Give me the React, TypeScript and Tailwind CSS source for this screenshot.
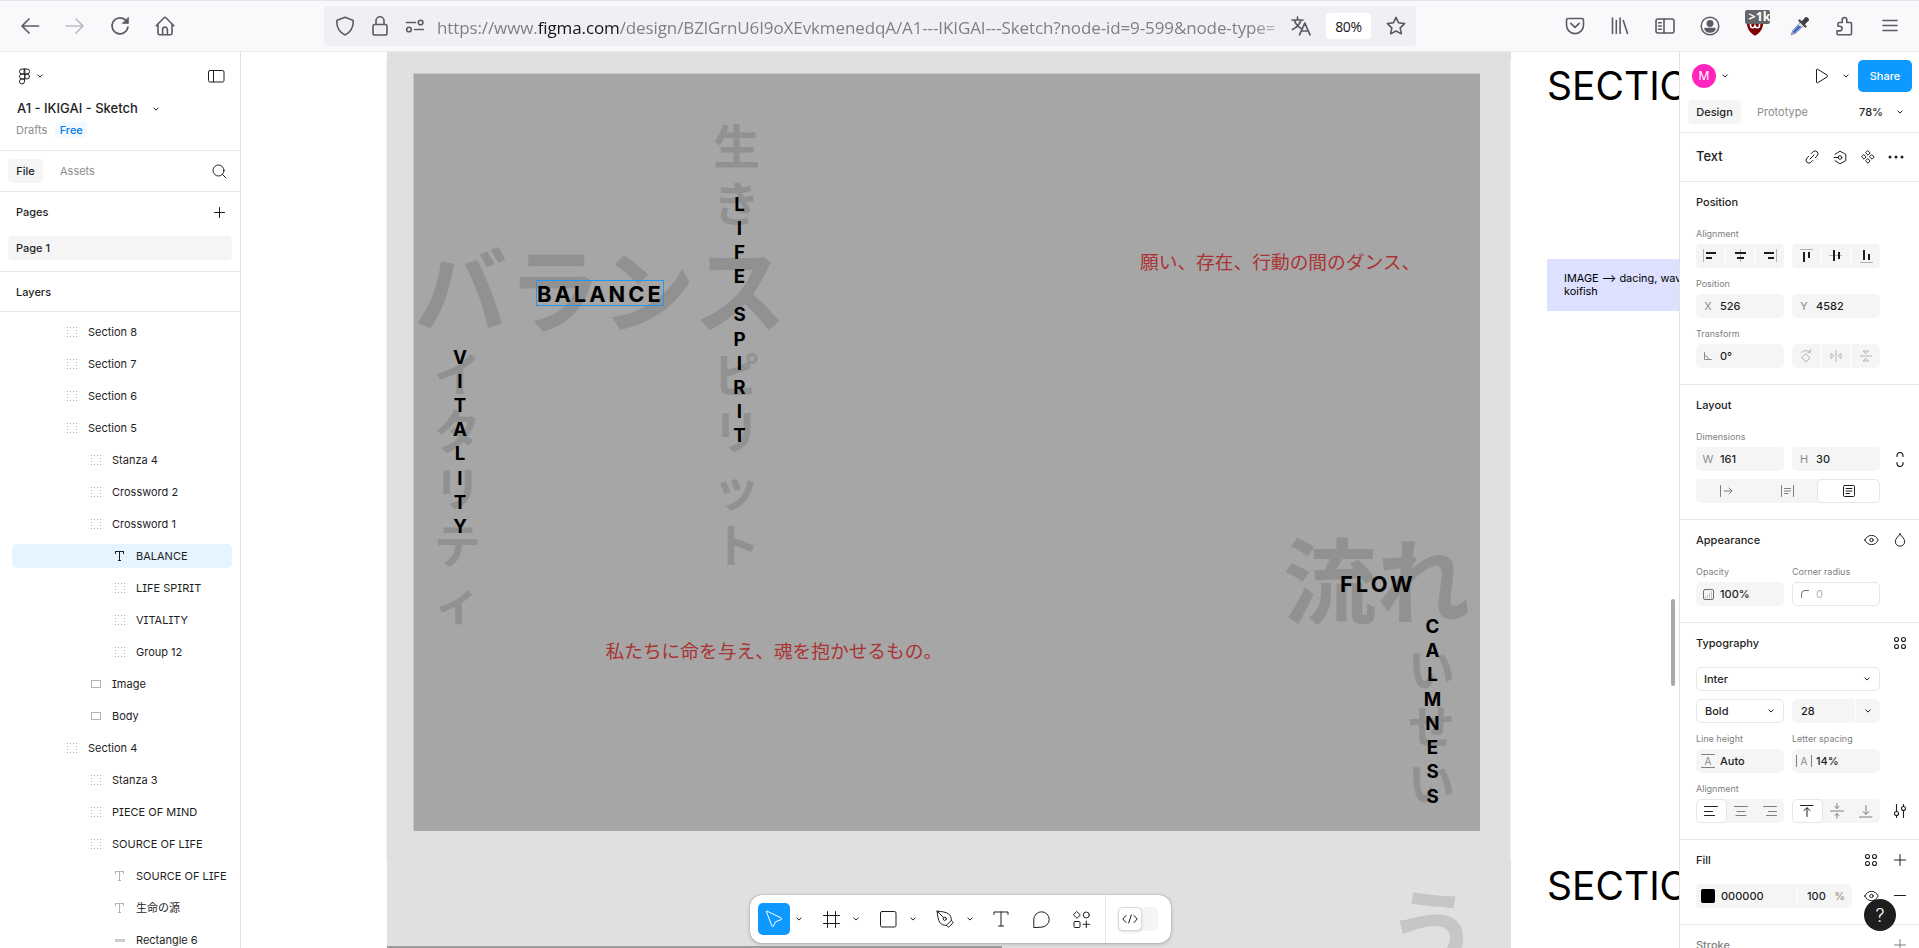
import type { ReactNode } from "react";

type IconProps = { w?: number; h?: number; sw?: number; className?: string; children: ReactNode };

function Icon({ w = 16, h = 16, sw = 1, className = "", children }: IconProps) {
  return (
    <svg
      width={w}
      height={h}
      viewBox={`0 0 ${w} ${h}`}
      fill="none"
      stroke="currentColor"
      strokeWidth={sw}
      strokeLinecap="round"
      strokeLinejoin="round"
      className={`shrink-0 ${className}`}
    >
      {children}
    </svg>
  );
}

const Chevron = ({ className = "" }: { className?: string }) => (
  <Icon w={8} h={8} className={className}>
    <path d="M1.8 2.9 4 5.1 6.2 2.9" />
  </Icon>
);

/* ---------- Browser toolbar ---------- */

function NavCell({ children }: { children: ReactNode }) {
  return <div className="flex h-full w-[45px] shrink-0 items-center justify-center">{children}</div>;
}

function BrowserBar() {
  return (
    <header className="flex h-[52px] shrink-0 items-center border-t border-b border-t-[#e4e4e8] border-b-[#ebebef] bg-[#f9f9fb] pl-[7px] text-[#5b5b66]">
      <NavCell>
        <Icon w={20} h={20} sw={1.7}>
          <path d="M18.5 10H2M9 3 2 10l7 7" />
        </Icon>
      </NavCell>
      <NavCell>
        <Icon w={20} h={20} sw={1.7} className="text-[#bcbcc2]">
          <path d="M1.5 10H18M11 3l7 7-7 7" />
        </Icon>
      </NavCell>
      <NavCell>
        <Icon w={20} h={20} sw={1.7}>
          <path d="M17.9 11.2A8 8 0 1 1 15.4 4" />
          <path d="M18.4 1.6v5.8h-5.8z" fill="currentColor" strokeWidth={0.8} />
        </Icon>
      </NavCell>
      <NavCell>
        <Icon w={20} h={20} sw={1.6}>
          <path d="M1.2 9.8 9.1 1.7a1.2 1.2 0 0 1 1.8 0l7.9 8.1M3 8.4v8.8c0 .9.7 1.6 1.6 1.6h10.8c.9 0 1.6-.7 1.6-1.6V8.4" />
          <path d="M7.6 18.5v-5.1a2.400 2.400 0 0 1 4.800 0v5.100" />
        </Icon>
      </NavCell>

      <div className="ml-[137px] flex h-10 w-[1092px] shrink-0 items-center rounded bg-[#f0f0f4] pl-[3px]">
        <div className="flex w-[35px] justify-center">
          <Icon w={20} h={20} sw={1.6}>
            <path d="M10 1.200 17.800 4.200c.3.100.5.400.5.700-.1 6.600-2.400 11.400-8.300 14C4.100 16.300 1.800 11.500 1.700 4.900c0-.3.200-.6.500-.7z" />
          </Icon>
        </div>
        <div className="flex w-[35px] justify-center">
          <Icon w={16} h={20} sw={1.6}>
            <rect x="1" y="8.500" width="14" height="10.500" rx="1.800" />
            <path d="M4 8.300V4.800a4 4 0 0 1 8 0v3.500" />
          </Icon>
        </div>
        <div className="flex w-[35px] justify-center">
          <Icon w={20} h={14} sw={1.6}>
            <path d="M1.500 3.500h9M9.500 10.500h9" />
            <circle cx="15.600" cy="3.500" r="2.300" />
            <circle cx="4" cy="10.500" r="2.300" />
          </Icon>
        </div>
        <div className="ml-[5px] w-[846px] overflow-hidden pt-[3px] whitespace-nowrap font-['Open_Sans',sans-serif] text-[17px] leading-[26px] tracking-[-0.110px] text-[#7f7f86] [mask-image:linear-gradient(to_right,#000_815px,transparent_855px)]">
          https://www.<span className="text-[#15141a]">figma.com</span>
          /design/BZlGrnU6I9oXEvkmenedqA/A1---IKIGAI---Sketch?node-id=9-599&amp;node-type=
        </div>
        <div className="flex w-9 justify-center">
          <Icon w={20} h={20} sw={1.7}>
            <path d="M1 4h11M6.500 1.200V4M10 4C9 8 5.500 11.500 1.500 13.500M3.300 4c1 3.500 3.500 6.500 6.500 8.200M8.500 18.800 13.800 7l5.200 11.800M10.300 15h7" />
          </Icon>
        </div>
        <div className="ml-[7px] flex h-[26px] w-[45px] items-center justify-center rounded bg-white pt-px font-['Open_Sans',sans-serif] text-[14px] tracking-[-0.3px] text-[#15141a]">
          80%
        </div>
        <div className="ml-[13px] flex w-6 justify-center">
          <Icon w={20} h={20} sw={1.6}>
            <path d="m10 1.300 2.600 5.500 6 .8-4.400 4.200 1.100 6.100L10 15l-5.300 2.900 1.100-6.100L1.400 7.600l6-.8z" />
          </Icon>
        </div>
      </div>

      <div className="ml-auto flex h-full pr-[7px]">
        <NavCell>
          <Icon w={20} h={20} sw={1.6}>
            <path d="M3.200 2.500h13.600c.9 0 1.700.7 1.700 1.700v4.900a8.500 8.500 0 0 1-17 0V4.200c0-1 .8-1.700 1.700-1.700z" />
            <path d="m5.800 7.300 4.200 4 4.200-4" />
          </Icon>
        </NavCell>
        <NavCell>
          <Icon w={18} h={20} sw={1.6}>
            <path d="M1.500 2v15.500M5.300 4.500v13M9.100 2v15.500M12.300 4.500l4.200 13" />
          </Icon>
        </NavCell>
        <NavCell>
          <Icon w={20} h={18} sw={1.6}>
            <rect x="1" y="2" width="18" height="14" rx="2" />
            <path d="M9 2v14M3.500 5.800h2.800M3.500 9h2.800M3.500 12.200h2.800" />
          </Icon>
        </NavCell>
        <NavCell>
          <Icon w={20} h={20} sw={1.5}>
            <circle cx="10" cy="10" r="8.800" />
            <circle cx="10" cy="7.500" r="2.700" fill="currentColor" />
            <path d="M5 12.500h10c-.5 2.300-2.500 3.500-5 3.500s-4.500-1.200-5-3.500z" fill="currentColor" />
          </Icon>
        </NavCell>
        <NavCell>
          <div className="relative">
            <svg width="20" height="20" viewBox="0 0 20 20">
              <path d="M10 0c3 1.800 5 2.600 8.500 2.800 0 8-1.500 13-8.500 17C3 15.800 1.500 10.800 1.500 2.800 5 2.600 7 1.800 10 0z" fill="#800000" />
              <path d="M5.500 7.500v2a2.200 2.200 0 0 0 4.500 0V8.500v1a2.200 2.200 0 0 0 4.500 0v-2" fill="none" stroke="#fff" strokeWidth="1.600" />
            </svg>
            <span className="absolute -top-[6px] left-0 flex h-[14px] w-[25px] items-center overflow-hidden rounded-[2px] bg-[#666] pl-[4px] font-['Open_Sans',sans-serif] text-[12.500px] font-bold whitespace-nowrap text-white">
              &gt;1k
            </span>
          </div>
        </NavCell>
        <NavCell>
          <svg width="20" height="20" viewBox="0 0 20 20">
            <path d="M11 6 2.800 14.200l-1.700 4.700 4.700-1.700L14 9z" fill="#dfe6f5" stroke="#8a8f9c" strokeWidth="1" />
            <path d="m8.500 9.500-5.200 5.500-.9 2.600 2.600-.9L11.500 10.500z" fill="#3b5bd0" />
            <path d="m9.500 4.500 6 6" stroke="#4a4a52" strokeWidth="2.400" strokeLinecap="round" />
            <path d="m11.500 5.500 3.600-4c1.500-1.500 5 1.500 3.600 3.200l-4.200 4z" fill="#3f3f47" />
          </svg>
        </NavCell>
        <NavCell>
          <Icon w={20} h={20} sw={1.6}>
            <path d="M3 18.700h12.500c.6 0 1-.4 1-1V7.500c0-.6-.4-1-1-1h-3.700V3.800a2.300 2.300 0 0 0-4.600 0v2.700H4c-.6 0-1 .4-1 1v2.800h1.800a2.300 2.300 0 0 1 0 4.600H2v2.800c0 .6.400 1 1 1z" />
          </Icon>
        </NavCell>
        <NavCell>
          <Icon w={18} h={16} sw={1.6}>
            <path d="M2 2.500h14M2 7.500h14M2 12.500h14" />
          </Icon>
        </NavCell>
      </div>
    </header>
  );
}

/* ---------- Left sidebar ---------- */

type LayerKind = "group" | "text" | "rect" | "line";
type Layer = { name: string; kind: LayerKind; depth: 0 | 1 | 2; selected?: boolean };

const layers: Layer[] = [
  { name: "Section 8", kind: "group", depth: 0 },
  { name: "Section 7", kind: "group", depth: 0 },
  { name: "Section 6", kind: "group", depth: 0 },
  { name: "Section 5", kind: "group", depth: 0 },
  { name: "Stanza 4", kind: "group", depth: 1 },
  { name: "Crossword 2", kind: "group", depth: 1 },
  { name: "Crossword 1", kind: "group", depth: 1 },
  { name: "BALANCE", kind: "text", depth: 2, selected: true },
  { name: "LIFE SPIRIT", kind: "group", depth: 2 },
  { name: "VITALITY", kind: "group", depth: 2 },
  { name: "Group 12", kind: "group", depth: 2 },
  { name: "Image", kind: "rect", depth: 1 },
  { name: "Body", kind: "rect", depth: 1 },
  { name: "Section 4", kind: "group", depth: 0 },
  { name: "Stanza 3", kind: "group", depth: 1 },
  { name: "PIECE OF MIND", kind: "group", depth: 1 },
  { name: "SOURCE OF LIFE", kind: "group", depth: 1 },
  { name: "SOURCE OF LIFE", kind: "text", depth: 2 },
  { name: "生命の源", kind: "text", depth: 2 },
  { name: "Rectangle 6", kind: "line", depth: 2 },
];

const indent = { 0: "pl-[55px]", 1: "pl-[79px]", 2: "pl-[103px]" };

function LayerIcon({ kind, selected }: { kind: LayerKind; selected?: boolean }) {
  return (
    <svg
      width="10"
      height="10"
      viewBox="0 0 10 10"
      fill="none"
      strokeWidth="1"
      shapeRendering="crispEdges"
      className={selected ? "stroke-[#1e1e1e]" : "stroke-[#b3b3b3]"}
    >
      {kind === "group" && <rect x="0.5" y="0.5" width="9" height="9" strokeDasharray="1.500 1.500" strokeDashoffset="0.750" />}
      {kind === "text" && <path d="M0.500 2.500v-2h8v2M4.500 0.500v9M3 9.500h3" />}
      {kind === "rect" && <rect x="0.5" y="1.5" width="9" height="7" />}
      {kind === "line" && <path d="M0 5h10" strokeWidth="3" className="stroke-[#cccccc]" />}
    </svg>
  );
}

function LeftSidebar() {
  return (
    <aside className="flex w-[241px] shrink-0 flex-col overflow-hidden border-r border-[#e0e0e0] bg-white">
      <div className="border-b border-[#e6e6e6] pb-3">
        <div className="flex h-12 items-center pr-[15px] pl-[18px]">
          <Icon w={13} h={17}>
            <path d="M6.500 1H4a2.500 2.500 0 0 0 0 5h2.500zM6.500 1H9a2.500 2.500 0 0 1 0 5H6.500zM6.500 6H4a2.500 2.500 0 0 0 0 5h2.500zM6.500 11H4a2.500 2.500 0 1 0 2.500 2.500z" />
            <circle cx="9" cy="8.500" r="2.500" />
          </Icon>
          <Chevron className="ml-[5px]" />
          <Icon w={17} h={13} className="ml-auto">
            <rect x="0.500" y="0.500" width="15.500" height="11.500" rx="1.500" />
            <path d="M5.500 0.500v11.500" />
          </Icon>
        </div>
        <div className="flex h-4 items-center pt-px pl-[17px] text-[13px] font-[550]">
          A1 - IKIGAI - Sketch
          <Chevron className="ml-[14px]" />
        </div>
        <div className="mt-[6px] flex h-4 items-center pl-4 text-[11px] text-[#8c8c8c]">
          Drafts
          <span className="ml-2 flex h-4 w-8 items-center justify-center rounded bg-[#f2f9ff] font-[450] text-[#007be5]">Free</span>
        </div>
      </div>
      <div className="flex h-[41px] shrink-0 items-center border-b border-[#e6e6e6] pr-[13px] pl-2">
        <span className="flex h-6 w-[35px] items-center justify-center rounded-[5px] bg-[#f5f5f5] font-[550]">File</span>
        <span className="ml-[17px] font-normal text-[#8c8c8c]">Assets</span>
        <Icon w={15} h={15} className="ml-auto">
          <circle cx="6.500" cy="6.500" r="5.500" />
          <path d="m10.500 10.500 3.500 3.500" />
        </Icon>
      </div>
      <div className="border-b border-[#e6e6e6] px-2 pb-[11px]">
        <div className="mb-1 flex h-10 items-center justify-between pr-[7px] pl-2 font-[550]">
          Pages
          <Icon w={11} h={11}>
            <path d="M5.500 0.500v10M0.500 5.500h10" />
          </Icon>
        </div>
        <div className="flex h-6 items-center rounded-[5px] bg-[#f5f5f5] pl-2 font-[500]">Page 1</div>
      </div>
      <div className="flex h-10 shrink-0 items-center border-b border-[#e6e6e6] pt-px pl-4 font-[550]">Layers</div>
      <div className="flex min-h-0 flex-1 flex-col overflow-hidden pt-1 pr-2 pl-3 [font-feature-settings:'cv08']">
        {layers.map((l, i) => (
          <div key={i} className="flex h-8 shrink-0 items-center">
            <div
              className={`flex h-6 w-[220px] items-center gap-[11px] rounded-[5px] whitespace-nowrap ${indent[l.depth]} ${l.selected ? "bg-[#e5f4ff]" : ""}`}
            >
              <LayerIcon kind={l.kind} selected={l.selected} />
              <span>{l.name}</span>
            </div>
          </div>
        ))}
      </div>
    </aside>
  );
}

/* ---------- Canvas ---------- */

function Letters({ text, className }: { text: string; className: string }) {
  return (
    <div className={`absolute w-10 text-center text-[18.720px] font-bold text-black ${className}`}>
      {text.split("").map((c, i) => (
        <div key={i} className={c === " " ? "h-[14px]" : "h-[24.220px] leading-[24.220px]"}>
          {c}
        </div>
      ))}
    </div>
  );
}

function Kana({ text, className }: { text: string; className: string }) {
  return (
    <div
      className={`absolute w-[47px] font-['Noto_Sans_CJK_JP',sans-serif] text-[46.800px] font-bold text-[#919191] ${className}`}
    >
      {text.split("").map((c, i) => (
        <div key={i} className="h-[57px] leading-[57px]">
          {c === " " ? "\u00a0" : c}
        </div>
      ))}
    </div>
  );
}

function Canvas() {
  return (
    <main className="relative min-w-0 flex-1 overflow-hidden bg-white">
      <div className="absolute top-0 left-[146px] h-full w-[1124px] bg-[#e0e0e0]" />
      <div className="absolute top-[9px] left-[145px] h-[799px] w-px bg-[#f0f0f0]" />
      <div className="absolute top-[9px] left-[1269px] h-[799px] w-px bg-[#f0f0f0]" />
      <div className="absolute top-[22px] left-[173px] h-[757px] w-[1066px] bg-[#a6a6a6] shadow-[-1px_-1px_0_#c6c6c6]" />

      <div className="absolute top-[165px] left-[173px] font-['Noto_Sans_CJK_JP',sans-serif] text-[93.600px] leading-[136px] font-bold whitespace-nowrap text-[#919191]">
        バランス
      </div>
      <Kana text="生き  ピリット" className="top-[63px] left-[472px]" />
      <Kana text="イタリティ" className="top-[291px] left-[193px]" />
      <div className="absolute top-[456px] left-[1042px] font-['Noto_Sans_CJK_JP',sans-serif] text-[93.600px] leading-[136px] font-bold whitespace-nowrap text-[#919191]">
        流れ
      </div>
      <Kana text="いせい" className="top-[586px] left-[1167px]" />
      <div className="absolute top-[807px] left-[1145px] font-['Noto_Sans_CJK_JP',sans-serif] text-[93.600px] leading-[136px] font-bold text-[#c6c6c6]">
        う
      </div>

      <Letters text="LIFE SPIRIT" className="top-[140.500px] left-[478.500px]" />
      <Letters text="VITALITY" className="top-[293.500px] left-[199px]" />
      <Letters text="CALMNESS" className="top-[563px] left-[1171.500px]" />

      <div className="absolute top-[228px] left-[295px] flex h-[26px] w-[128px] items-center border border-[#2196f3] pt-[2px] text-[21.840px] leading-6 font-bold tracking-[0.14em] text-black">
        BALANCE
      </div>
      <div className="absolute top-[519px] left-[1099px] text-[21.840px] leading-[26px] font-bold tracking-[0.14em] text-black">
        FLOW
      </div>

      <div className="absolute top-[195px] left-[899px] font-['Noto_Sans_CJK_JP',sans-serif] text-[18.720px] leading-7 whitespace-nowrap text-[#aa3333]">
        願い、存在、行動の間のダンス、
      </div>
      <div className="absolute top-[584px] left-[364.500px] font-['Noto_Sans_CJK_JP',sans-serif] text-[18.720px] leading-7 whitespace-nowrap text-[#aa3333]">
        私たちに命を与え、魂を抱かせるもの。
      </div>

      <div className="absolute top-[10px] left-[1306px] text-[39px] leading-[47px] text-black">SECTION</div>
      <div className="absolute top-[810px] left-[1306px] text-[39px] leading-[47px] text-black">SECTION</div>
      <div className="absolute top-[207px] left-[1306px] h-[52px] w-[200px] bg-[#dde0ff] pt-[13px] pl-[17px] text-[10.920px] leading-[13.200px] whitespace-nowrap text-black">
        IMAGE --&gt; dacing, waves,
        <br />
        koifish
      </div>

      <div className="absolute top-[547px] left-[1430px] h-[87px] w-1 rounded-sm bg-[#a9a9a9]" />
      <div className="absolute bottom-0 left-[146px] h-[2px] w-[615px] bg-[#9c9c9c]" />

      <Toolbar />
    </main>
  );
}

function Tool({ children, chevron }: { children: ReactNode; chevron?: boolean }) {
  return (
    <>
      <div className="flex size-8 items-center justify-center">{children}</div>
      {chevron && (
        <div className="flex w-[17px] justify-center">
          <Chevron />
        </div>
      )}
    </>
  );
}

function Toolbar() {
  return (
    <div className="absolute top-[843px] left-[509px] flex h-12 w-[421px] items-center rounded-xl bg-white pl-2 shadow-[0_0_1px_rgba(0,0,0,0.5),0_1px_4px_rgba(0,0,0,0.2)]">
      <div className="flex size-8 items-center justify-center rounded-[5px] bg-[#0d99ff] text-white">
        <Icon w={20} h={20} className="text-white">
          <path d="M2.500 2.800 8 17.200c.2.600 1 .6 1.300 0l2.200-4.500 6-2.200c.6-.3.600-1 0-1.300L3.300 2.200c-.5-.2-1 .1-.8.600z" />
        </Icon>
      </div>
      <div className="flex w-[17px] justify-center">
        <Chevron />
      </div>
      <div className="ml-2 flex items-center">
        <Tool chevron>
          <Icon w={17} h={17}>
            <path d="M4.500 0.500v16M12.500 0.500v16M0.500 4.500h16M0.500 12.500h16" />
          </Icon>
        </Tool>
      </div>
      <div className="ml-2 flex items-center">
        <Tool chevron>
          <Icon w={17} h={17}>
            <rect x="0.500" y="0.500" width="15.500" height="15.500" rx="1.500" />
          </Icon>
        </Tool>
      </div>
      <div className="ml-2 flex items-center">
        <Tool chevron>
          <Icon w={18} h={18}>
            <path d="M1.200 1.200c4.500.2 9 1 11.300 2.600 2 1.500 3 4 2.800 6.600l-4.900 4.900c-2.600.2-5.100-.8-6.600-2.800C2.200 10.200 1.400 5.700 1.200 1.200zM1.200 1.200l6.400 6.400M15.300 10.400l1.500 1.500c.4.400.4.800 0 1.200l-3.700 3.700c-.4.400-.8.400-1.200 0l-1.500-1.500" />
            <circle cx="8.800" cy="8.800" r="1.600" />
          </Icon>
        </Tool>
      </div>
      <div className="ml-[7px] flex items-center gap-2">
        <Tool>
          <Icon w={16} h={16}>
            <path d="M1 3.500V1h14v2.500M8 1v14M5.500 15h5" />
          </Icon>
        </Tool>
        <Tool>
          <Icon w={17} h={17}>
            <path d="M0.800 16.200V8.500a7.700 7.700 0 1 1 7.700 7.700z" />
          </Icon>
        </Tool>
        <Tool>
          <Icon w={17} h={17}>
            <path d="M4 0.700 7.300 4 4 7.300 0.700 4zM13.300 10v6.500M10 13.300h6.500" />
            <circle cx="13.300" cy="4" r="3" />
            <rect x="1" y="10.500" width="6" height="6" rx="1" />
          </Icon>
        </Tool>
      </div>
      <div className="ml-2 h-full w-px bg-[#e6e6e6]" />
      <div className="ml-3 flex h-6 w-10 items-center rounded-[5px] bg-[#f5f5f5]">
        <div className="flex h-6 w-6 items-center justify-center rounded-[5px] border border-[#d9d9d9] bg-white shadow-sm">
          <Icon w={16} h={10}>
            <path d="M4 1.500 0.800 5 4 8.500M12 1.500 15.200 5 12 8.500M9.300 1 6.700 9" />
          </Icon>
        </div>
      </div>
    </div>
  );
}

/* ---------- Right sidebar ---------- */

function Title({ children, tall, icons }: { children: ReactNode; tall?: boolean; icons?: ReactNode }) {
  return (
    <div className={tall ? "h-11" : "h-[42px]"}>
      <div className="flex h-10 items-center">
        <span className="font-[550]">{children}</span>
        <div className="ml-auto flex items-center gap-[13px]">{icons}</div>
      </div>
    </div>
  );
}

function Labels({ a, b, first }: { a: string; b?: string; first?: boolean }) {
  return (
    <div className={`flex h-5 items-center gap-2 text-[9px] text-[#7f7f7f] ${first ? "" : "mt-[6px]"}`}>
      <span className="w-[88px]">{a}</span>
      {b && <span>{b}</span>}
    </div>
  );
}

function Section({ children }: { children: ReactNode }) {
  return <section className="shrink-0 border-b border-[#e6e6e6] pr-[11px] pb-4 pl-4">{children}</section>;
}

function Field({ icon, value }: { icon: ReactNode; value: string }) {
  return (
    <div className="flex h-6 w-[88px] items-center rounded-[5px] bg-[#f5f5f5] font-[450]">
      <span className="flex w-6 justify-center font-normal text-[#8c8c8c]">{icon}</span>
      {value}
    </div>
  );
}

function Segments({ items, className = "" }: { items: ReactNode[]; className?: string }) {
  return (
    <div className={`flex h-6 w-[88px] gap-px overflow-hidden rounded-[5px] ${className}`}>
      {items.map((it, i) => (
        <div key={i} className="flex flex-1 items-center justify-center bg-[#f5f5f5]">
          {it}
        </div>
      ))}
    </div>
  );
}

function Toggle({ items, selected }: { items: ReactNode[]; selected: number }) {
  return (
    <div className="flex h-6 flex-1 rounded-[5px] bg-[#f5f5f5] text-[#7f7f7f]">
      {items.map((it, i) => (
        <div
          key={i}
          className={`flex flex-1 items-center justify-center rounded-[5px] ${i === selected ? "border border-[#e6e6e6] bg-white text-[#1e1e1e]" : ""}`}
        >
          {it}
        </div>
      ))}
    </div>
  );
}

const Cell = ({ children }: { children: ReactNode }) => (
  <div className="flex w-4 items-center justify-center">{children}</div>
);

const AlignBars = ({ line, bars }: { line: string; bars: string }) => (
  <svg width="14" height="14" viewBox="0 0 14 14" fill="none" shapeRendering="crispEdges">
    <path d={line} stroke="#b3b3b3" strokeWidth="1" />
    <path d={bars} stroke="#1e1e1e" strokeWidth="2" />
  </svg>
);

const Dots = () => (
  <Icon w={14} h={14} sw={1.1}>
    <circle cx="3.500" cy="3.500" r="2" />
    <circle cx="10.500" cy="3.500" r="2" />
    <circle cx="3.500" cy="10.500" r="2" />
    <circle cx="10.500" cy="10.500" r="2" />
  </Icon>
);

const Eye = () => (
  <Icon w={15} h={12}>
    <path d="M.8 6c1.500-3 3.900-4.600 6.700-4.600S12.700 3 14.200 6c-1.500 3-3.900 4.600-6.700 4.600S2.300 9 .8 6z" />
    <circle cx="7.500" cy="6" r="1.700" />
  </Icon>
);

const Plus = () => (
  <Icon w={12} h={12}>
    <path d="M6 .5v11M.5 6h11" />
  </Icon>
);

function RightSidebar() {
  return (
    <aside className="flex w-60 shrink-0 flex-col overflow-hidden border-l border-[#e0e0e0] bg-white">
      <div className="shrink-0 border-b border-[#e6e6e6] py-2 pl-2">
        <div className="flex h-8 items-center pr-[7px] pl-1">
          <span className="flex size-6 items-center justify-center rounded-full bg-[#ff24bd] text-[12px] text-white">M</span>
          <Chevron className="ml-[5px]" />
          <Icon w={14} h={16} className="ml-auto">
            <path d="M1.500 2v12c0 .8.600 1.100 1.200.7l9.300-5.700c.6-.4.600-1.600 0-2L2.700 1.300c-.6-.4-1.200-.1-1.200.7z" />
          </Icon>
          <Chevron className="ml-[13px]" />
          <span className="ml-2 flex h-8 w-[54px] items-center justify-center rounded-[5px] bg-[#0d99ff] font-[500] text-white">Share</span>
        </div>
        <div className="mt-2 flex h-6 items-center pr-[15px]">
          <span className="flex h-6 w-[53px] items-center justify-center rounded-[5px] bg-[#f5f5f5] font-[550]">Design</span>
          <span className="ml-4 text-[#8c8c8c]">Prototype</span>
          <span className="ml-auto font-[450]">78%</span>
          <Chevron className="ml-[13px]" />
        </div>
      </div>

      <div className="flex h-[49px] shrink-0 items-center border-b border-[#e6e6e6] pr-[15px] pl-4">
        <span className="text-[13px] font-[550]">Text</span>
        <div className="ml-auto flex items-center gap-3">
          <Cell>
            <Icon w={14} h={14}>
              <path d="M6.200 3.600 8 1.800a2.800 2.800 0 0 1 4.100 4.100l-1.800 1.800M7.800 10.400 6 12.200a2.800 2.800 0 0 1-4.100-4.100l1.800-1.800M5 9l4-4" />
            </Icon>
          </Cell>
          <Cell>
            <Icon w={14} h={15}>
              <path d="M2 4.300 7 1.200l5.800 3.200v6.200L7 13.800l-5-3.100M1 7.500h4.200" />
              <circle cx="7" cy="7.500" r="1.800" />
            </Icon>
          </Cell>
          <Cell>
            <Icon w={14} h={14}>
              <path d="m7 .8 2.200 2.200L7 5.200 4.800 3zM7 8.800l2.200 2.200L7 13.200 4.800 11zM3 4.800 5.200 7 3 9.200.8 7zM11 4.800 13.200 7 11 9.200 8.800 7z" />
            </Icon>
          </Cell>
          <Cell>
            <Icon w={16} h={4}>
              <g fill="currentColor" stroke="none">
                <circle cx="2" cy="2" r="1.500" />
                <circle cx="8" cy="2" r="1.500" />
                <circle cx="14" cy="2" r="1.500" />
              </g>
            </Icon>
          </Cell>
        </div>
      </div>

      <Section>
        <Title>Position</Title>
        <Labels a="Alignment" first />
        <div className="flex gap-2">
          <Segments
            items={[
              <AlignBars line="M0.500 0v13" bars="M3 4h10M3 9h6" />,
              <AlignBars line="M7.500 0v13" bars="M2 4h11M4 9h7" />,
              <AlignBars line="M13.500 0v13" bars="M1 4h10M5 9h6" />,
            ]}
          />
          <Segments
            items={[
              <AlignBars line="M1 0.500h13" bars="M5 3v10M10 3v6" />,
              <AlignBars line="M0 6.500h13" bars="M5 1v11M10 3v7" />,
              <AlignBars line="M1 13.500h13" bars="M5 1v10M10 5v6" />,
            ]}
          />
        </div>
        <Labels a="Position" />
        <div className="flex gap-2">
          <Field icon="X" value="526" />
          <Field icon="Y" value="4582" />
        </div>
        <Labels a="Transform" />
        <div className="flex gap-2">
          <Field
            icon={
              <Icon w={8} h={8}>
                <path d="M.5 .5v7h7M.5 3.500a4 4 0 0 1 4 4" />
              </Icon>
            }
            value="0°"
          />
          <Segments
            className="text-[#b3b3b3]"
            items={[
              <Icon w={12} h={14}>
                <path d="M6 4.800 10 9l-4 4-4-4zM1.500 3.500c2.500-2.500 6-2.500 8.500-.5M10.500 .8V3.300H8" />
              </Icon>,
              <Icon w={12} h={12}>
                <path d="M6 .5v11M1 3.500v5L3.500 6zM11 3.500v5L8.500 6z" />
              </Icon>,
              <Icon w={12} h={12}>
                <path d="M.5 6h11M3.500 1h5L6 3.500zM3.500 11h5L6 8.500z" />
              </Icon>,
            ]}
          />
        </div>
      </Section>

      <Section>
        <Title>Layout</Title>
        <Labels a="Dimensions" first />
        <div className="flex items-center gap-2">
          <Field icon="W" value="161" />
          <Field icon="H" value="30" />
          <div className="ml-auto flex w-4 justify-center">
            <Icon w={8} h={15} sw={1.2}>
              <path d="M1 4.500V3.500a3 3 0 0 1 6 0v1M1 10.500v1a3 3 0 0 0 6 0v-1" />
            </Icon>
          </div>
        </div>
        <div className="mt-2 flex w-[184px]">
          <Toggle
            selected={2}
            items={[
              <Icon w={14} h={12}>
                <path d="M1.500 .5v11M5 6h8M10 3l3 3-3 3" />
              </Icon>,
              <Icon w={13} h={12}>
                <path d="M.5 .5v11M12.500 .5v11M3.500 3.500h6M3.500 6h6M3.500 8.500h3.500" />
              </Icon>,
              <Icon w={12} h={12}>
                <rect x="0.500" y="0.500" width="11" height="11" rx="1" />
                <path d="M3 3.500h6M3 6h6M3 8.500h3.500" />
              </Icon>,
            ]}
          />
        </div>
      </Section>

      <Section>
        <Title
          icons={
            <>
              <Cell>
                <Eye />
              </Cell>
              <Cell>
                <Icon w={12} h={14}>
                  <path d="M6 .8C7 3.200 10.700 5.300 10.700 8.500a4.700 4.700 0 0 1-9.400 0C1.300 5.300 5 3.200 6 .8z" />
                </Icon>
              </Cell>
            </>
          }
        >
          Appearance
        </Title>
        <Labels a="Opacity" b="Corner radius" first />
        <div className="flex gap-2">
          <Field
            icon={
              <Icon w={11} h={11} className="text-[#6f6f6f]">
                <rect x="0.500" y="0.500" width="10" height="10" rx="1.500" />
                <path d="M8.500 3v6M6.500 5v4M4.500 7v2M2.500 8.500v.5" strokeDasharray="0.100 1.900" strokeWidth="0.800" />
              </Icon>
            }
            value="100%"
          />
          <div className="flex h-6 w-[88px] items-center rounded-[5px] border border-[#e6e6e6]">
            <span className="flex w-[23px] justify-center text-[#6f6f6f]">
              <Icon w={8} h={8}>
                <path d="M.5 7.500V4a3.500 3.500 0 0 1 3.500-3.500h3.500" />
              </Icon>
            </span>
            <span className="text-[#b3b3b3]">0</span>
          </div>
        </div>
      </Section>

      <Section>
        <Title
          tall
          icons={
            <Cell>
              <Dots />
            </Cell>
          }
        >
          Typography
        </Title>
        <div className="flex h-6 w-[184px] items-center justify-between rounded-[5px] border border-[#e6e6e6] pr-2 pl-[7px] font-[450]">
          Inter
          <Chevron />
        </div>
        <div className="mt-2 flex gap-2">
          <div className="flex h-6 w-[88px] items-center justify-between rounded-[5px] border border-[#e6e6e6] pr-2 pl-2 font-[450]">
            Bold
            <Chevron />
          </div>
          <div className="flex h-6 w-[88px] gap-px overflow-hidden rounded-[5px] font-[450]">
            <div className="flex flex-1 items-center bg-[#f5f5f5] pl-[9px]">28</div>
            <div className="flex w-6 items-center justify-center bg-[#f5f5f5]">
              <Chevron />
            </div>
          </div>
        </div>
        <Labels a="Line height" b="Letter spacing" />
        <div className="flex gap-2">
          <Field
            icon={
              <span className="flex h-[14px] w-[14px] items-center justify-center border-t border-b border-[#7f7f7f] text-[10px] leading-none">
                A
              </span>
            }
            value="Auto"
          />
          <Field
            icon={
              <span className="flex h-3 w-4 items-center justify-center border-r border-l border-[#7f7f7f] text-[10px] leading-none">
                A
              </span>
            }
            value="14%"
          />
        </div>
        <Labels a="Alignment" />
        <div className="flex items-center">
          <div className="flex w-[184px] gap-2">
            <Toggle
              selected={0}
              items={[
                <Icon w={14} h={10}>
                  <path d="M.5 .5h13M.5 5.500h8M.5 9.500h10" />
                </Icon>,
                <Icon w={14} h={10}>
                  <path d="M.5 .5h13M3 5.500h8M2 9.500h10" />
                </Icon>,
                <Icon w={14} h={10}>
                  <path d="M.5 .5h13M5.500 5.500h8M3.500 9.500h10" />
                </Icon>,
              ]}
            />
            <Toggle
              selected={0}
              items={[
                <Icon w={14} h={14}>
                  <path d="M.5 1.500h12.500M7 12.500V4M4 6.500 7 3.700l3 2.800" />
                </Icon>,
                <Icon w={14} h={16}>
                  <path d="M.5 8h13M7 .8v4.500M5 3.500l2 2 2-2M7 15.200v-4.500M5 12.500l2-2 2 2" />
                </Icon>,
                <Icon w={14} h={14}>
                  <path d="M.5 13h12.500M7 1.500V10M4 7.500l3 2.800 3-2.800" />
                </Icon>,
              ]}
            />
          </div>
          <div className="ml-auto flex w-4 justify-center">
            <Icon w={12} h={14} sw={1.1}>
              <path d="M2.500 .5v7M2.500 11.500v2M9.500 .5v2M9.500 6.500v7" />
              <circle cx="2.500" cy="9.500" r="2" />
              <circle cx="9.500" cy="4.500" r="2" />
            </Icon>
          </div>
        </div>
      </Section>

      <Section>
        <Title
          tall
          icons={
            <>
              <Cell>
                <Dots />
              </Cell>
              <Cell>
                <Plus />
              </Cell>
            </>
          }
        >
          Fill
        </Title>
        <div className="flex items-center">
          <div className="flex h-6 w-[156px] gap-px overflow-hidden rounded-[5px] font-[450]">
            <div className="flex w-[101px] items-center gap-[6px] bg-[#f5f5f5] pl-[5px]">
              <span className="size-[14px] rounded-[2px] bg-black" />
              000000
            </div>
            <div className="flex flex-1 items-center justify-between bg-[#f5f5f5] pr-[7px] pl-[9px]">
              100 <span className="font-normal text-[#8c8c8c]">%</span>
            </div>
          </div>
          <div className="ml-auto flex items-center gap-[13px]">
            <Cell>
              <Eye />
            </Cell>
            <Cell>
              <Icon w={12} h={12}>
                <path d="M.5 5.500h11" />
              </Icon>
            </Cell>
          </div>
        </div>
      </Section>

      <div className="flex h-10 shrink-0 items-center justify-between pr-[13px] pl-4 font-[450] text-[#7f7f7f]">
        Stroke
        <Plus />
      </div>
    </aside>
  );
}

export default function App() {
  return (
    <div className="relative flex h-[948px] w-[1919px] flex-col overflow-hidden bg-white font-['Inter','Noto_Sans_CJK_JP',sans-serif] text-[11px] text-[#1e1e1e]">
      <BrowserBar />
      <div className="flex min-h-0 flex-1">
        <LeftSidebar />
        <Canvas />
        <RightSidebar />
      </div>
      <div className="absolute right-[23px] bottom-[17px] flex size-8 items-center justify-center rounded-full bg-[#1e1e1e] text-[18px] font-light text-white">
        ?
      </div>
    </div>
  );
}
